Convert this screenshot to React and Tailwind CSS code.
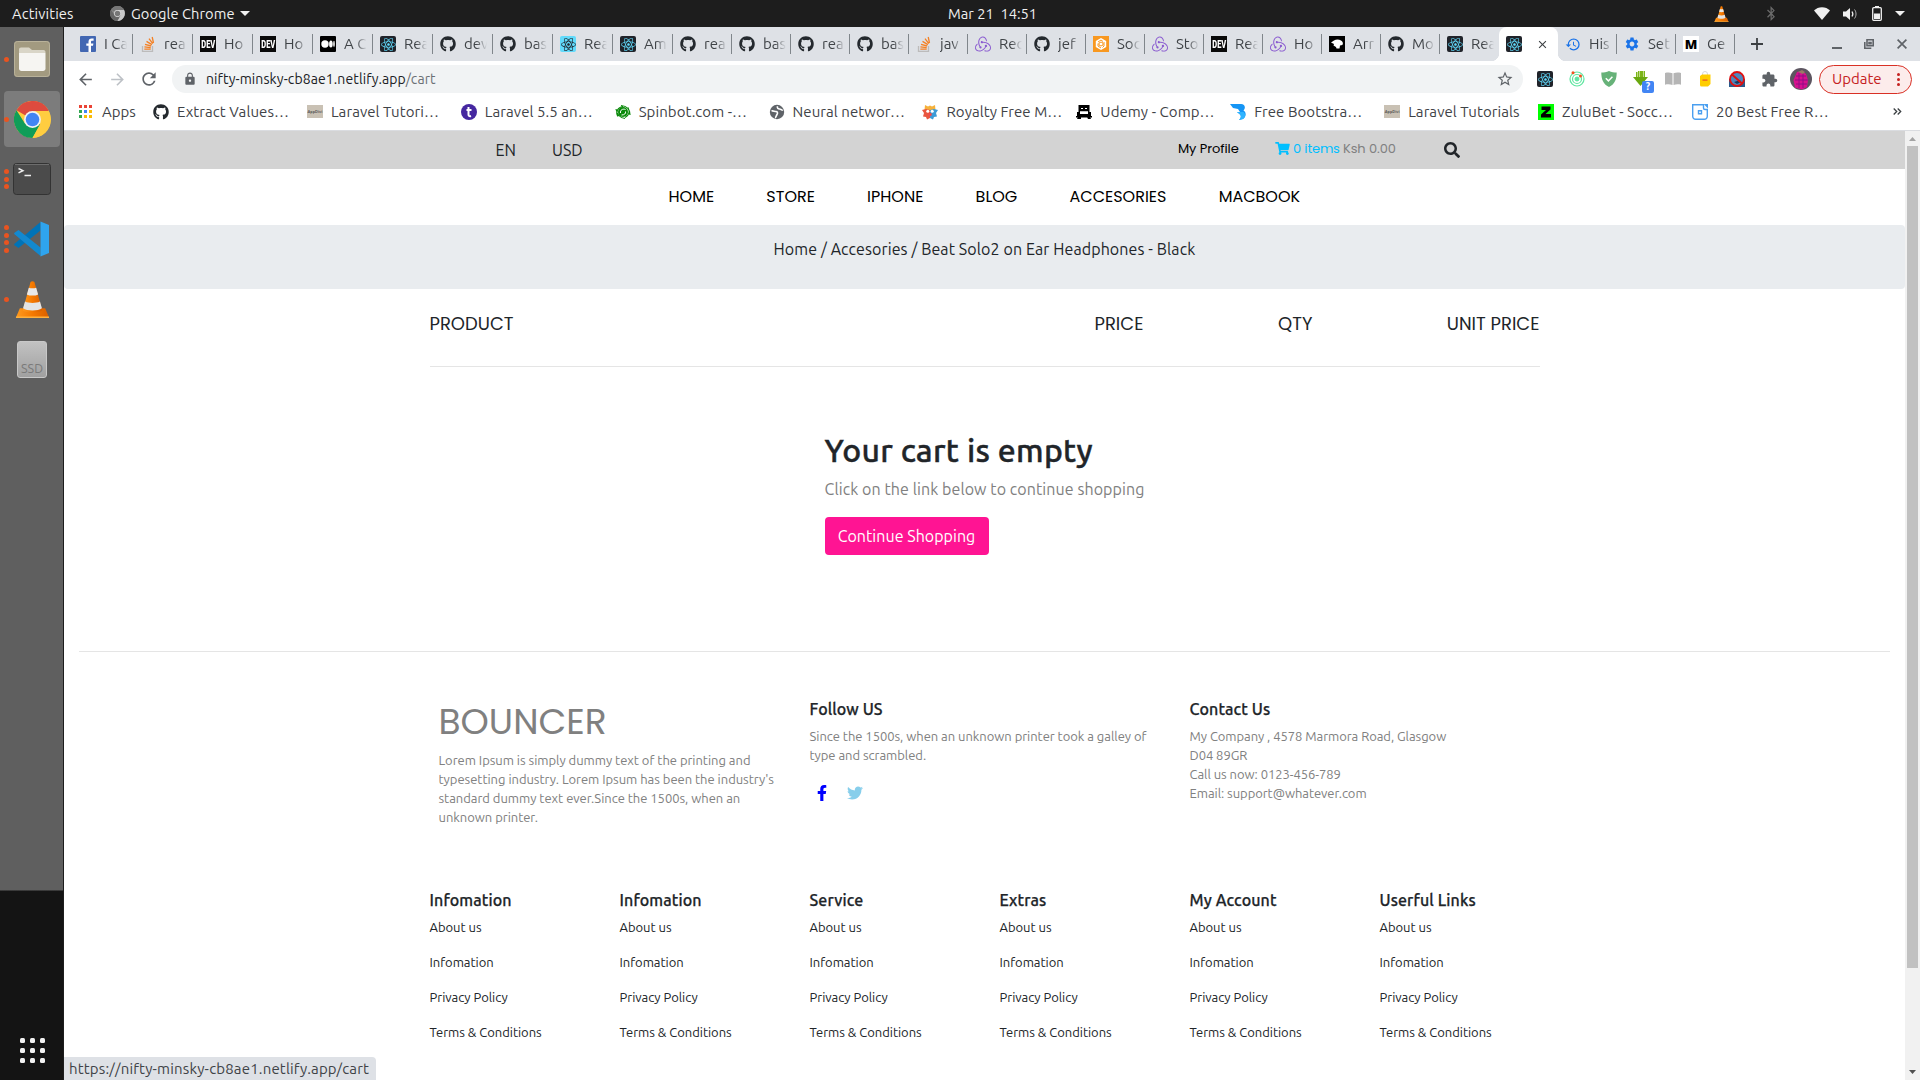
import { FaGithub, FaReact, FaFacebookF, FaTwitter, FaShoppingCart, FaSearch, FaBluetoothB } from "react-icons/fa";
import { SiRedux } from "react-icons/si";
import { MdLock, MdStarBorder, MdExtension, MdArrowBack, MdArrowForward, MdRefresh, MdHistory, MdSettings, MdPublic, MdClose } from "react-icons/md";

const Github = () => <FaGithub className="size-4 text-[#24292e]" />;

const ReactDark = () => (
  <span className="flex size-4 items-center justify-center rounded-[2px] bg-[#20232a]">
    <FaReact className="size-[15px] text-[#61dafb]" />
  </span>
);

const ReactLight = () => (
  <span className="flex size-4 items-center justify-center rounded-[2px] bg-[#61dafb]">
    <FaReact className="size-[15px] text-[#20232a]" />
  </span>
);

const Redux = () => <SiRedux className="size-4 text-[#8a5bd0]" />;

const Facebook = () => (
  <svg viewBox="0 0 16 16" className="size-4">
    <rect width="16" height="16" rx="1" fill="#4267b2" />
    <path d="M11 16V9.8h2l.4-2.4H11V6c0-.8.3-1.3 1.300-1.300h1.300V2.500c-.3 0-1-.1-1.900-.1-2 0-3.200 1.200-3.200 3.300v1.700H6.300v2.400h2.200V16z" fill="#fff" />
  </svg>
);

const Stack = () => (
  <svg viewBox="0 0 16 16" className="size-4" fill="none">
    <path d="M2.500 10v5.300h10V10" stroke="#bcbbbb" strokeWidth="1.300" />
    <path d="M4.300 13.200h6.400M4.400 10.900l6.300.7M5 8.300l6.200 1.700M6.500 5.400l5.400 3.200M9 2.700l3.800 5M12.200 1l1.300 6" stroke="#f48024" strokeWidth="1.300" />
  </svg>
);

const Dev = () => (
  <span className="flex size-4 items-center justify-center bg-[#0a0a0a]">
    <span className="scale-x-[.68] font-['Roboto',sans-serif] text-[11px] leading-none font-black text-white">DEV</span>
  </span>
);

const Medium = () => (
  <svg viewBox="0 0 16 16" className="size-4">
    <rect width="16" height="16" rx="1" fill="#000" />
    <circle cx="5" cy="8" r="3.700" fill="#fff" />
    <ellipse cx="10.900" cy="8" rx="1.800" ry="3.500" fill="#fff" />
    <ellipse cx="14" cy="8" rx=".8" ry="3.200" fill="#fff" />
  </svg>
);

const Sandbox = () => (
  <svg viewBox="0 0 16 16" className="size-4">
    <rect width="16" height="16" fill="#f89820" />
    <path d="M8 2l5.200 3v6L8 14l-5.200-3V5z" fill="#fff" />
    <path d="M5 6l3-2 2 1.500M11 6v4l-1.500 1.500M8 12l-3-2V7.500M8 6l2 1v2L8 10 6 9V7z" stroke="#f89820" fill="none" />
  </svg>
);

const Bird = () => (
  <svg viewBox="0 0 16 16" className="size-4">
    <rect width="16" height="16" fill="#000" />
    <path d="M2 6.500L5 4.500c2-1.500 5-1.500 7 0 2 1.300 2.500 3.500 1.300 4.500L11 9.500l-.5 3H7.500L7 11 4.500 9.500 5 8z" fill="#fff" />
  </svg>
);

const MLogo = () => (
  <span className="flex size-4 items-center justify-center bg-white font-['Open_Sans',sans-serif] text-[13px] leading-none font-extrabold text-black">M</span>
);

const HistoryIcon = () => <MdHistory className="size-[17px] text-[#1a73e8]" />;
const Gear = () => <MdSettings className="size-4 text-[#1a73e8]" />;

const Vlc = ({ className }) => (
  <svg viewBox="0 0 36 38" className={className}>
    <defs>
      <linearGradient id="cone" x1="0" x2="1">
        <stop offset="0" stopColor="#ff9a1f" />
        <stop offset=".5" stopColor="#f57900" />
        <stop offset="1" stopColor="#d85f00" />
      </linearGradient>
    </defs>
    <path d="M5 28h26l4 9.500H1z" fill="url(#cone)" />
    <path d="M1 36.500h34v1.500H1z" fill="#ffb13d" />
    <path d="M16 1c1-1 3-1 4 0l8 29c-3 3-17 3-20 0z" fill="url(#cone)" />
    <path d="M14.200 6.800c2 1 5.600 1 7.600 0l2 7c-3 1.600-8.600 1.600-11.600 0z" fill="#e8e8e8" />
    <path d="M10.300 21c4 2 11.400 2 15.400 0l2 7c-4 3-15.400 3-19.400 0z" fill="#e4e4e4" />
  </svg>
);

const Chrome = ({ className, mono }) => (
  <svg viewBox="0 0 48 48" className={className}>
    <circle cx="24" cy="24" r="24" fill={mono ? "#8b8b8b" : "#ffcd40"} />
    <path d="M24 24L3.200 12A24 24 0 0 1 44.800 12z" fill={mono ? "#777" : "#dd4b3e"} />
    <path d="M24 13h20.800A24 24 0 0 0 24 0z" fill={mono ? "#777" : "#dd4b3e"} />
    <path d="M3.200 12A24 24 0 0 0 24 48L34 30 14 29z" fill={mono ? "#666" : "#109d58"} />
    <path d="M24 48A24 24 0 0 0 44.800 13H24l10 17z" fill={mono ? "#c9c9c9" : "#ffcd40"} />
    <circle cx="24" cy="24" r="11" fill={mono ? "#ddd" : "#f1f1f1"} />
    <circle cx="24" cy="24" r="8.800" fill={mono ? "#777" : "#4285f4"} />
  </svg>
);

const tabs = [
  [Facebook, "I Ca"], [Stack, "rea"], [Dev, "Ho"], [Dev, "Ho"], [Medium, "A C"], [ReactDark, "Rea"], [Github, "dev"],
  [Github, "bas"], [ReactLight, "Rea"], [ReactDark, "Am"], [Github, "rea"], [Github, "bas"], [Github, "rea"], [Github, "bas"],
  [Stack, "jav"], [Redux, "Rec"], [Github, "jef"], [Sandbox, "Soc"], [Redux, "Sto"], [Dev, "Rea"], [Redux, "Ho"],
  [Bird, "Arr"], [Github, "Mo"], [ReactDark, "Rea"], [ReactDark, null], [HistoryIcon, "His"], [Gear, "Set"], [MLogo, "Ge"],
];

const Tab = ({ Icon, label, wide, bare }) => (
  <div className={`flex h-[34px] shrink-0 items-center pl-[7px] ${wide ? "w-[60px]" : "w-[59px]"}`}>
    <span className="flex w-4 shrink-0 justify-center"><Icon /></span>
    <span className="ml-2 w-[27px] text-[15px] leading-5 whitespace-nowrap text-[#3f4347] [mask-image:linear-gradient(to_right,#000_12px,transparent_23px)]">{label}</span>
    {!bare && <span className="ml-auto h-5 w-px shrink-0 bg-[#80868b]" />}
  </div>
);

const ActiveTab = () => (
  <div className="relative flex h-[34px] w-[59px] shrink-0 items-center rounded-t-lg bg-white pl-[7px]">
    <span className="absolute bottom-0 -left-2 size-2 bg-[radial-gradient(circle_at_0_0,transparent_8px,#fff_8.500px)]" />
    <span className="absolute -right-2 bottom-0 size-2 bg-[radial-gradient(circle_at_100%_0,transparent_8px,#fff_8.500px)]" />
    <ReactDark />
    <MdClose className="ml-[14px] size-[13px] text-[#3c4043]" />
  </div>
);

const AppsIcon = () => (
  <span className="grid grid-cols-3 gap-[2px]">
    {["bg-[#ea4335]", "bg-[#ea4335]", "bg-[#ea4335]", "bg-[#34a853]", "bg-[#4285f4]", "bg-[#fbbc05]", "bg-[#34a853]", "bg-[#fbbc05]", "bg-[#fbbc05]"].map((c, i) => (
      <span key={i} className={`size-[3px] ${c}`} />
    ))}
  </span>
);

const AppDivide = () => (
  <span className="flex h-[13px] w-4 items-center justify-center bg-[#c9c1b4] text-[4px] leading-none font-bold text-[#555]">AppDivi</span>
);

const Tee = () => (
  <svg viewBox="0 0 16 16" className="size-4">
    <circle cx="8" cy="8" r="8" fill="#4527a0" />
    <path d="M7.500 3v7.500c0 1.500 1 2 2.500 1.500M5.500 6h5" stroke="#fff" strokeWidth="2" fill="none" />
  </svg>
);

const Spin = () => (
  <svg viewBox="0 0 16 16" className="size-4" fill="none">
    <circle cx="8" cy="8" r="5" fill="#0a8a0a" />
    <path d="M1 5c1 5 4 9 9 9.500M15 11C15 6 12 2 6 1.500M3 12.500C0 8 3 3 8 2.500M13 3.500c2 4 1 8-3 10" stroke="#0a8a0a" strokeWidth="1.200" />
    <path d="M5.500 9c-.5-3 2-4.500 5-3.500M10.500 7.500c.5 2-1 3.500-4 3.500" stroke="#fff" strokeWidth="1" />
  </svg>
);

const Freepik = () => (
  <svg viewBox="0 0 16 16" className="size-4">
    <path d="M3 1l3 1.500 2-1 2 1L13 1l.5 5h-11z" fill="#f6b13b" />
    <path d="M0 6l4-1 4 1v8l-3 1.500L4 13l-3-.5L2 9z" fill="#e9573f" />
    <path d="M16 6l-4-1-4 1v8l3 1.500 1-2.500 3-.5L14 9z" fill="#3d9bd6" />
    <circle cx="5.800" cy="7.300" r="1.500" fill="#fff" /><circle cx="10.200" cy="7.300" r="1.500" fill="#fff" />
    <circle cx="8" cy="10.500" r="1.800" fill="#ef4b4b" />
  </svg>
);

const Couch = () => (
  <svg viewBox="0 0 16 16" className="size-4">
    <path d="M2.500 1h11v7h-11zM1 8h3v2h8V8h3v4H1zM0 12h16v1.500H0zM2 13h3v2H1zM11 13h3l1 2h-3z" fill="#000" />
    <path d="M5 4h2v1H5zM9 4h2v1H9zM4 7h8v.8H4z" fill="#fff" />
  </svg>
);

const Boot = () => (
  <svg viewBox="0 0 16 16" className="size-4">
    <path d="M0 0h11c4 0 5 4 2.500 6.500C16.500 8 16.500 13 13 15l-4 1c2-2 2.500-4 1-5.500L7 8h3L8 5 3 4z" fill="#1595f5" />
    <path d="M7 8h6.500c2 1.500 2.500 5-.5 7l-4 1c2-2 2.500-4 1-5.500z" fill="#2fb4ff" />
  </svg>
);

const Zulu = () => (
  <svg viewBox="0 0 16 16" className="size-4">
    <rect width="16" height="16" fill="#0f0" />
    <path d="M3.500 2.500h9v3L7.500 10H13v3.500H3v-3L8 6H3.500z" fill="#000" />
  </svg>
);

const Best = () => (
  <svg viewBox="0 0 16 16" className="size-4" fill="none" stroke="#4a9ff0" strokeWidth="1.400">
    <path d="M11.500 .7H.7v11.600a3 3 0 0 0 3 3h8.600a3 3 0 0 0 3-3V5.500h-2.300a1.500 1.500 0 0 1-1.500-1.500z" />
    <path d="M6.500 6.700h3v3h-3z" />
    <path d="M13.300.7h2v2z" fill="#4a9ff0" />
  </svg>
);

const Globe = () => (
  <svg viewBox="0 0 16 16" className="size-4">
    <circle cx="8" cy="8" r="7.200" fill="#5f6368" />
    <path d="M2.500 7c1.500-.5 3 .5 4.500.5S9 9 8 10.500 7 13.500 6 13.800M8.500 2.200C8 4 9 5 10.500 5s2 1.500 3.300 1.300" stroke="#fff" strokeWidth="1.600" fill="none" />
  </svg>
);

const bookmarks = [
  [Github, "Extract Values…"], [AppDivide, "Laravel Tutori…"], [Tee, "Laravel 5.5 an…"], [Spin, "Spinbot.com -…"],
  [Globe, "Neural networ…"], [Freepik, "Royalty Free M…"], [Couch, "Udemy - Comp…"], [Boot, "Free Bootstra…"],
  [AppDivide, "Laravel Tutorials"], [Zulu, "ZuluBet - Socc…"], [Best, "20 Best Free R…"],
];

const Slot = ({ children }) => <span className="flex h-[30px] w-8 shrink-0 items-center justify-center">{children}</span>;

const Toolbar = () => (
  <div className="flex h-9 shrink-0 items-center bg-white pl-[5px]">
    <Slot><MdArrowBack className="size-[19px] text-[#5f6368]" /></Slot>
    <Slot><MdArrowForward className="size-[19px] text-[#bdc1c6]" /></Slot>
    <Slot><MdRefresh className="size-5 text-[#5f6368]" /></Slot>
    <div className="ml-[7px] flex h-7 w-[1351px] shrink-0 items-center rounded-full bg-[#f1f3f4] pr-[9px] pl-[10.500px]">
      <MdLock className="size-[14px] text-[#5f6368]" />
      <span className="ml-[9.500px] text-[14px] leading-5 tracking-[.1px] text-[#202124]">nifty-minsky-cb8ae1.netlify.app<span className="text-[#6b7075]">/cart</span></span>
      <MdStarBorder className="ml-auto size-[18px] text-[#5f6368]" />
    </div>
    <div className="ml-[6px] flex items-center">
      <Slot><ReactDark /></Slot>
      <Slot>
        <svg viewBox="0 0 16 16" className="size-4" fill="none" stroke="#5ee6a0">
          <circle cx="8" cy="8" r="7" strokeWidth="1.200" /><circle cx="8" cy="8" r="4.500" strokeWidth="1.200" />
          <circle cx="8" cy="8" r="2" fill="#5ee6a0" /><circle cx="4" cy="1.800" r="1.500" fill="#f4511e" stroke="none" /><circle cx="11.500" cy="5" r="1.500" fill="#f4511e" stroke="none" />
        </svg>
      </Slot>
      <Slot>
        <svg viewBox="0 0 16 16" className="size-4">
          <path d="M8 0c2.500 1.300 5 1.500 7.700 1.500C15.700 8 14 13 8 16 2 13 .3 8 .3 1.500 3 1.500 5.500 1.300 8 0z" fill="#67b279" />
          <path d="M4.800 7.300l2.600 2.600 4-4.200" stroke="#fff" strokeWidth="1.500" fill="none" />
        </svg>
      </Slot>
      <Slot>
        <span className="relative">
          <svg viewBox="0 0 16 16" className="size-4">
            <path d="M5 0h1.500v6H5zM7 0h3v6H7zM10.500 0H12v6h-1.500zM3 1h1.500v5H3z" fill="#7cb518" />
            <path d="M0 6h15l-7.500 9z" fill="#6aa80f" />
          </svg>
          <span className="absolute top-[10px] left-[9px] flex size-3 items-center justify-center rounded-[2px] bg-[#4285f4] text-[10px] leading-none font-bold text-white">?</span>
        </span>
      </Slot>
      <Slot>
        <svg viewBox="0 0 16 16" className="size-4">
          <path d="M0 2c3-.8 5-.6 7.500.3V14c-2.500-.8-5-.8-7.500-.3zM16 2c-3-.8-5-.6-7.500.3V14c2.500-.8 5-.8 7.500-.3z" fill="#b5b5b5" />
        </svg>
      </Slot>
      <Slot>
        <svg viewBox="0 0 16 16" className="size-4">
          <path d="M5.500 5V3a2.500 2.500 0 0 1 5 0v2" stroke="#d8d8d8" fill="none" />
          <path d="M5 3.500h8.500V13L11 15.500H4.500A1.500 1.500 0 0 1 3 14V5z" fill="#ffcd00" />
          <path d="M5.500 8.500h5v1.200h-5z" fill="#e8502a" />
        </svg>
      </Slot>
      <Slot>
        <svg viewBox="0 0 16 16" className="size-4">
          <rect y="8" width="16" height="8" fill="#2b5a8c" /><circle cx="8" cy="8" r="7" fill="#4f86bd" stroke="#e01010" strokeWidth="1.800" />
          <path d="M5 11l6-2 1 2-4 2z" fill="#173a63" /><path d="M3 3.500l10 9" stroke="#e01010" strokeWidth="1.800" />
        </svg>
      </Slot>
      <Slot><MdExtension className="size-[17px] text-[#5f6368]" /></Slot>
      <Slot>
        <svg viewBox="0 0 22 22" className="size-[22px]">
          <circle cx="11" cy="11" r="11" fill="#5c5560" />
          <path d="M7 4l5-1 4 3 2 6-1 7-5 2.500-7-2L3.500 12z" fill="#d8108e" />
          <path d="M6 8h10M5 12h13M6 16h11M9 5v15M13 5v15" stroke="#8a0f86" strokeWidth=".9" />
          <path d="M8 4l4-2 3 2-2 2z" fill="#9a7a66" />
        </svg>
      </Slot>
    </div>
    <div className="ml-[2px] flex h-[29px] w-[93px] shrink-0 items-center rounded-full border border-[#d93025] bg-[#fceceb] pl-3">
      <span className="w-[51px] text-[15px] leading-5 text-[#c5221f]">Update</span>
      <span className="ml-[14px] flex flex-col gap-[2px]">
        <span className="size-[3px] rounded-full bg-[#c5221f]" /><span className="size-[3px] rounded-full bg-[#c5221f]" /><span className="size-[3px] rounded-full bg-[#c5221f]" />
      </span>
    </div>
  </div>
);

const Dots = ({ n }) => (
  <span className="flex w-[5px] flex-col gap-[2.600px]">
    {Array.from({ length: n }, (_, i) => <span key={i} className="size-[5px] rounded-full bg-[#e95420]" />)}
  </span>
);

const DockItem = ({ dots, active, children }) => (
  <div className="flex h-[60px] w-[63px] items-center pl-1">
    <div className={`relative flex size-14 items-center justify-center rounded ${active ? "bg-[#7c7c7c]" : ""}`}>
      <span className="absolute inset-y-0 left-0 flex items-center"><Dots n={dots} /></span>
      {children}
    </div>
  </div>
);

const Dock = () => (
  <div className="flex w-16 shrink-0 flex-col border-r border-[#1d1d1d] bg-[linear-gradient(#5f5f5f_863px,#141414_864px)] pt-[2px]">
    <DockItem dots={1}>
      <svg viewBox="0 0 36 36" className="size-9">
        <rect width="36" height="36" rx="3.500" fill="#a29a80" /><rect x=".5" y=".5" width="35" height="35" rx="3" fill="none" stroke="#b9b29a" />
        <path d="M5 8.500c0-1.200.8-2 2-2h8l3 2.500h11.500c1 0 2 .8 2 2V12H5z" fill="#d9d5c7" />
        <path d="M5 12h26.500v15.500c0 1.500-1 2.500-2.500 2.500H7.500C6 30 5 29 5 27.500z" fill="#f6f5f2" />
      </svg>
    </DockItem>
    <DockItem dots={1} active><Chrome className="size-[37px]" /></DockItem>
    <DockItem dots={3}>
      <svg viewBox="0 0 38 32" className="h-8 w-[38px]">
        <rect x=".5" y=".5" width="37" height="31" rx="3" fill="#4b4b4b" stroke="#333" /><path d="M2 1.500h34" stroke="#6d6d6d" />
        <path d="M5.500 5.500l4.500 2.200-4.500 2.200M11.500 12.500H18" stroke="#eee" strokeWidth="1.400" fill="none" />
      </svg>
    </DockItem>
    <DockItem dots={4}>
      <svg viewBox="0 0 36 36" className="size-9">
        <path d="M26.500 9.500L4.500 27 .8 24.600a1.400 1.400 0 0 1 0-2.200L26.500 1z" fill="#0073b7" />
        <path d="M26.500 26.500L4.500 9 .8 11.400a1.400 1.400 0 0 0 0 2.200L26.500 35z" fill="#1389d0" />
        <path d="M26.500.5L35 4v28l-8.500 3.500z" fill="#2fa4ee" />
      </svg>
    </DockItem>
    <DockItem dots={1}><Vlc className="h-[37px] w-[35px]" /></DockItem>
    <DockItem dots={0}>
      <span className="flex h-[37px] w-[30px] items-end justify-center rounded-[3px] border border-[#c8c8c8] bg-linear-to-b from-[#c2c2c2] to-[#a0a0a0] pb-[3px] text-[12.500px] leading-3 text-[#7a7a7a]">SSD</span>
    </DockItem>
    <div className="mt-auto mb-[17.500px] ml-[19.500px] grid grid-cols-3 gap-[5px] self-start">
      {Array.from({ length: 9 }, (_, i) => <span key={i} className="size-[5px] rounded-[1.500px] bg-[#f2f2f2]" />)}
    </div>
  </div>
);

const SystemBar = () => (
  <div className="flex h-[27px] shrink-0 items-center bg-[#1d1d1d] text-[14.670px] leading-5 text-[#f0f0f0]">
    <span className="ml-3 w-[98px] tracking-[.15px]">Activities</span>
    <Chrome mono className="size-[15px]" />
    <span className="ml-[6px] w-[109px] tracking-[.06px]">Google Chrome</span>
    <svg viewBox="0 0 10 5" className="h-[5px] w-[10px]"><path d="M0 0h10L5 5z" fill="#f0f0f0" /></svg>
    <span className="ml-[698px] whitespace-pre">{"Mar 21  14:51"}</span>
    <div className="ml-auto flex items-center pr-[15px]">
      <Vlc className="h-4 w-[15px]" />
      <FaBluetoothB className="ml-[36px] h-[15px] w-3 text-[#6a6a6a]" />
      <svg viewBox="0 0 16 13" className="ml-[37px] h-[13px] w-4"><path d="M0 3.500C4-1 12-1 16 3.500L8 13z" fill="#f0f0f0" /></svg>
      <svg viewBox="0 0 16 14" className="ml-3 h-[14px] w-4" fill="none" stroke="#f0f0f0">
        <path d="M1 4.500h3L8 1v12L4 9.500H1z" fill="#f0f0f0" stroke="none" /><path d="M10 4.500c1 1.500 1 3.500 0 5" strokeWidth="1.300" /><path d="M12.500 2.500c2 2.500 2 6.500 0 9" opacity=".7" />
      </svg>
      <svg viewBox="0 0 10 15" className="ml-[14px] h-[15px] w-[10px]"><path d="M3 0h4v1.500H3z" fill="#f0f0f0" /><rect x=".7" y="1.700" width="8.600" height="12.600" rx="1" fill="none" stroke="#f0f0f0" strokeWidth="1.300" /><path d="M2 7.500h6V13H2z" fill="#f0f0f0" /></svg>
      <svg viewBox="0 0 10 5" className="ml-[13px] h-[5px] w-[10px]"><path d="M0 0h10L5 5z" fill="#f0f0f0" /></svg>
    </div>
  </div>
);

const links = ["About us", "Infomation", "Privacy Policy", "Terms & Conditions"];

const Page = () => (
  <div className="flex min-w-0 flex-1 flex-col bg-white text-base text-[#212529]">
    <div className="flex h-[38px] items-start bg-[#d3d3d3] font-['Poppins','Inter',sans-serif] text-[13px] leading-[19px]">
      <div className="mt-[7px] ml-[431.500px] flex w-[682.500px] font-['Ubuntu','Noto_Sans',sans-serif] text-base leading-6">
        <span className="w-[56.500px]">EN</span>
        <span>USD</span>
      </div>
      <span className="mt-2 w-[97px] tracking-[-.08px] text-black">My Profile</span>
      <div className="mt-2 flex w-[169px] items-start text-[#00bfff]">
        <FaShoppingCart className="mt-[3px] mr-[3px] h-[13px] w-[15px]" />
        <span className="w-[50px] shrink-0 tracking-[-.15px] whitespace-nowrap">0 items</span>
        <span className="tracking-[-.1px] text-[#808080]">Ksh 0.00</span>
      </div>
      <FaSearch className="mt-[11px] size-4" />
    </div>
    <div className="flex h-14 gap-[52.200px] pt-4 pl-[604.500px] font-['Poppins','Inter',sans-serif] leading-6 text-black">
      {["HOME", "STORE", "IPHONE", "BLOG", "ACCESORIES", "MACBOOK"].map((t) => <span key={t}>{t}</span>)}
    </div>
    <div className="h-16 rounded bg-[#e9ecef] pt-3 text-center leading-6 tracking-[.1px]">Home / Accesories / Beat Solo2 on Ear Headphones - Black</div>
    <div className="ml-[365.500px] flex h-[78px] w-[1110px] border-b border-[#e5e5e5] pt-[21px] font-['Poppins','Inter',sans-serif] text-lg leading-[27px]">
      <span className="w-[665px]">PRODUCT</span>
      <span className="w-[183.500px]">PRICE</span>
      <span>QTY</span>
      <span className="ml-auto">UNIT PRICE</span>
    </div>
    <div className="mt-16 ml-[760.500px] flex flex-col items-start">
      <h2 className="text-[32px] leading-[38px] font-medium tracking-[.25px] [-webkit-text-stroke:.4px_#212529]">Your cart is empty</h2>
      <p className="mt-2 leading-6 tracking-[.08px] text-[#808080]">Click on the link below to continue shopping</p>
      <button className="mt-4 h-[38px] w-[164px] rounded bg-[#ff1493] tracking-[.04px] text-white">Continue Shopping</button>
    </div>
    <div className="mx-[15px] mt-24 h-px shrink-0 bg-[#e5e5e5]" />
    <div className="mt-12 ml-[365.500px] flex h-[191px] w-[1140px] shrink-0 text-[13px] leading-[19px] text-[#808080]">
      <div className="w-[380px] pl-[9px]">
        <div className="font-['Poppins','Inter',sans-serif] text-[36px] leading-[43px]">BOUNCER</div>
        <p className="mt-2 tracking-[-.03px] whitespace-nowrap">Lorem Ipsum is simply dummy text of the printing and<br />typesetting industry. Lorem Ipsum has been the industry's<br />standard dummy text ever.Since the 1500s, when an<br />unknown printer.</p>
      </div>
      <div className="w-[380px]">
        <h6 className="text-base leading-[19px] font-medium tracking-[.08px] text-[#212529] [-webkit-text-stroke:.25px_#212529]">Follow US</h6>
        <p className="mt-2 tracking-[-.04px]">Since the 1500s, when an unknown printer took a galley of<br />type and scrambled.</p>
        <div className="mt-5 flex gap-5 pl-[7.500px]">
          <FaFacebookF className="h-4 w-[10px] text-[#0000ff]" />
          <FaTwitter className="size-4 text-[#87ceeb]" />
        </div>
      </div>
      <div className="w-[380px]">
        <h6 className="text-base leading-[19px] font-medium tracking-[.12px] text-[#212529] [-webkit-text-stroke:.25px_#212529]">Contact Us</h6>
        <p className="mt-2 tracking-[-.05px]">My Company , 4578 Marmora Road, Glasgow<br />D04 89GR<br />Call us now: 0123-456-789<br />Email: support@whatever.com</p>
      </div>
    </div>
    <div className="ml-[365.500px] grid w-[1140px] shrink-0 grid-cols-6">
      {["Infomation", "Infomation", "Service", "Extras", "My Account", "Userful Links"].map((h, i) => (
        <div key={i}>
          <h6 className="text-base leading-[19px] font-medium tracking-[.12px] [-webkit-text-stroke:.25px_#212529]">{h}</h6>
          <div className="mt-2 flex flex-col gap-4 text-[13px] leading-[19px] tracking-[-.03px]">
            {links.map((l) => <span key={l}>{l}</span>)}
          </div>
        </div>
      ))}
    </div>
  </div>
);

const Scrollbar = () => (
  <div className="flex w-[15px] shrink-0 flex-col items-center bg-[#f1f1f1]">
    <svg viewBox="0 0 7 4" className="mt-[6px] h-1 w-[7px]"><path d="M0 4h7L3.500 0z" fill="#a3a3a3" /></svg>
    <div className="mt-[5px] h-[822px] w-[11px] bg-[#c1c1c1]" />
    <svg viewBox="0 0 7 4" className="mt-auto mb-[6px] h-1 w-[7px]"><path d="M0 0h7L3.500 4z" fill="#505050" /></svg>
  </div>
);

export default function App() {
  return (
    <div className="flex h-[1080px] w-[1920px] flex-col overflow-hidden bg-white font-['Ubuntu','Noto_Sans',sans-serif]">
      <SystemBar />
      <div className="flex min-h-0 flex-1">
        <Dock />
        <div className="relative flex min-w-0 flex-1 flex-col">
          <div className="flex h-[34px] shrink-0 bg-[#dee1e6] pl-[9px]">
            {tabs.map(([Icon, label], i) => label === null
              ? <ActiveTab key={i} />
              : <Tab key={i} Icon={Icon} label={label} wide={i < 10} bare={i === 23} />)}
            <svg viewBox="0 0 12 12" className="ml-[16px] mt-[11px] size-3 shrink-0" stroke="#3c4043" strokeWidth="1.800"><path d="M6 0v12M0 6h12" /></svg>
            <div className="mt-3 ml-auto flex items-start pr-[13px] text-[#5f6368]">
              <span className="mt-[8px] h-[2px] w-[10px] bg-[#5f6368]" />
              <svg viewBox="0 0 10 10" className="ml-[22px] size-[10px]" fill="none" stroke="currentColor" strokeWidth="1.600"><path d="M3 .8h6.200v6H3z" /><path d="M.8 3v6.200h6.500M5 3.500h2v1.300H5z" /></svg>
              <svg viewBox="0 0 10 10" className="ml-[23px] size-[10px]" stroke="currentColor" strokeWidth="1.700"><path d="M.6.6l8.800 8.800M9.400.6L.6 9.400" /></svg>
            </div>
          </div>
          <Toolbar />
          <div className="flex h-[34px] shrink-0 items-center border-b border-[#dadce0] bg-white pb-[4px] pl-[15px] text-[15px] leading-5 text-[#3f4347]">
            <div className="flex w-[74px] shrink-0 items-center">
              <AppsIcon />
              <span className="ml-[10px]">Apps</span>
            </div>
            {bookmarks.map(([Icon, label], i) => (
              <div key={i} className="flex w-[153.900px] shrink-0 items-center">
                <span className="flex w-4 justify-center"><Icon /></span>
                <span className="ml-2 tracking-[.07px] whitespace-nowrap">{label}</span>
              </div>
            ))}
            <svg viewBox="0 0 9 7" className="ml-[47px] h-[7px] w-[9px] shrink-0" fill="none" stroke="#3c4043" strokeWidth="1.300"><path d="M.7.5l3 3-3 3M4.700.5l3 3-3 3" /></svg>
          </div>
          <div className="flex min-h-0 flex-1">
            <Page />
            <Scrollbar />
          </div>
          <div className="absolute bottom-0 left-0 h-[23px] w-[312px] rounded-tr bg-[#dee1e6] pl-[5px] text-[15px] leading-[23px] tracking-[.17px] text-[#3f4347]">https://nifty-minsky-cb8ae1.netlify.app/cart</div>
        </div>
      </div>
    </div>
  );
}
